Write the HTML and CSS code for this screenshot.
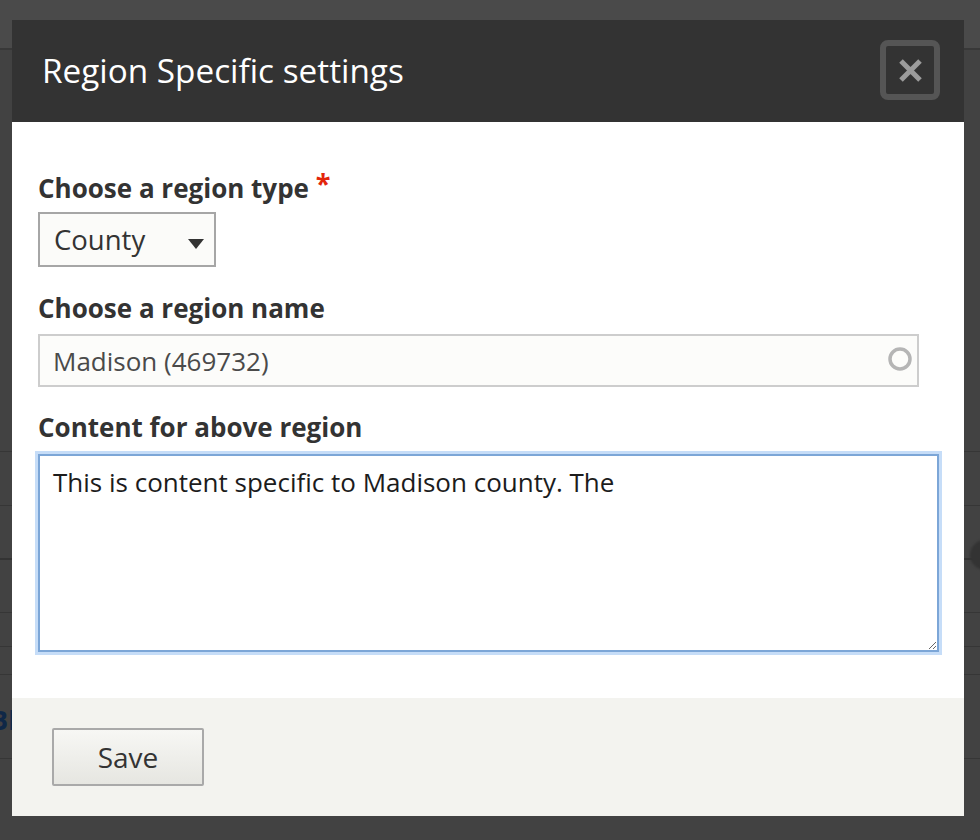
FILE: index.html
```html
<!DOCTYPE html>
<html lang="en">
<head>
<meta charset="utf-8">
<title>Region Specific settings</title>
<link rel="stylesheet" href="styles.css">
</head>
<body>
<div class="page">
  <div class="topbar"></div>
  <div class="row r1"></div>
  <div class="row r2"></div>
  <div class="row r3 has-icon"><span class="help-dot"></span></div>
  <div class="row r4"></div>
  <div class="row r5"></div>
  <div class="row r6"></div>
  <div class="row r7"><span class="link-text">Bl</span></div>
  <div class="row r8"></div>
</div>

<div class="dialog" role="dialog" aria-labelledby="dlg-title">
  <div class="dlg-head">
    <h2 class="dlg-title" id="dlg-title">Region Specific settings</h2>
    <button class="dlg-close" type="button" aria-label="Close">
      <svg width="25" height="25" viewBox="0 0 25 25" aria-hidden="true">
        <path d="M3 3 L22 22 M22 3 L3 22" stroke="#9c9c9c" stroke-width="5" fill="none"/>
      </svg>
    </button>
  </div>
  <div class="dlg-body">
    <div class="field field-type">
      <label class="field-label" for="region-type">Choose a region type <span class="req">*</span></label>
      <span class="select-wrap">
        <select id="region-type" class="select">
          <option>County</option>
        </select>
        <svg class="select-arrow" width="16" height="10" viewBox="0 0 16 10" aria-hidden="true"><path d="M0 0 H16 L8 10 Z" fill="#333"/></svg>
      </span>
    </div>
    <div class="field field-name">
      <label class="field-label" for="region-name">Choose a region name</label>
      <span class="input-wrap">
        <input id="region-name" class="text-input" type="text" value="Madison (469732)">
        <svg class="throbber" width="24" height="24" viewBox="0 0 24 24" aria-hidden="true"><circle cx="12" cy="12" r="10" stroke="#b5b5b5" stroke-width="3.5" fill="none"/></svg>
      </span>
    </div>
    <div class="field field-content">
      <label class="field-label" for="region-content">Content for above region</label>
      <textarea id="region-content" class="textarea">This is content specific to Madison county. The</textarea>
    </div>
  </div>
  <div class="dlg-foot">
    <button class="btn" type="button">Save</button>
  </div>
</div>
</body>
</html>
```

FILE: styles.css
```css
* {
  box-sizing: border-box;
}

html,
body {
  margin: 0;
  padding: 0;
}

body {
  width: 980px;
  height: 840px;
  overflow: hidden;
  position: relative;
  background: #424242;
  font-family: "Open Sans", "Liberation Sans", sans-serif;
}

/* Background page (dimmed behind the modal) */
.topbar {
  height: 50px;
  background: #4a4a4a;
  border-bottom: 2px solid #383838;
}

.row {
  border-bottom: 1px solid #363636;
}

.r1 { height: 402px; }
.r2 { height: 54px; }
.r3 { height: 54px; border-bottom: 2px solid #333; }
.r4 { height: 53px; }
.r5 { height: 34px; }
.r6 { height: 28px; }
.r7 {
  height: 84px;
  display: flex;
  align-items: center;
  overflow: hidden;
}
.r8 { height: 90px; border-bottom: 0; }

.has-icon {
  display: flex;
  justify-content: flex-end;
  align-items: flex-end;
}

.help-dot {
  width: 30px;
  height: 30px;
  border-radius: 50%;
  background: #333;
  margin-right: -20px;
  margin-bottom: -12px;
  filter: blur(1.2px);
}

.link-text {
  margin-left: -10px;
  font-size: 27px;
  font-weight: 700;
  color: #0f2847;
  padding-top: 6px;
}

/* Dialog */
.dialog {
  position: absolute;
  left: 12px;
  top: 20px;
  width: 952px;
  background: #fff;
}

.dlg-head {
  height: 102px;
  background: #333;
  display: flex;
  align-items: center;
  justify-content: space-between;
  padding: 0 24px 0 30px;
}

.dlg-title {
  margin: 0 0 2px;
  font-size: 33.3px;
  font-weight: 400;
  line-height: 28px;
  color: #fff;
}

.dlg-close {
  width: 60px;
  height: 60px;
  margin-top: -2px;
  padding: 0;
  border: 6px solid #555;
  border-radius: 8px;
  background: #333;
  display: flex;
  align-items: center;
  justify-content: center;
}

.dlg-body {
  padding: 52px 25px 46px 26px;
}

.field-name {
  margin-top: 27px;
}

.field-content {
  margin-top: 26px;
}

.field-label {
  display: block;
  font-size: 26px;
  font-weight: 700;
  line-height: 28px;
  color: #333;
  margin-bottom: 12px;
}

.field-type .field-label {
  margin-bottom: 10px;
}

.field-content .field-label {
  margin-bottom: 13px;
}

.req {
  color: #e3260b;
  font-size: 27px;
  vertical-align: top;
  position: relative;
  top: -5px;
}

.select-wrap {
  position: relative;
  display: block;
  width: 178px;
  height: 55px;
}

.select {
  display: block;
  width: 100%;
  height: 100%;
  margin: 0;
  padding: 0 0 0 14px;
  border: 2px solid #a6a6a6;
  border-radius: 0;
  background: #fbfbf9;
  font-family: inherit;
  font-size: 27.5px;
  color: #333;
  -webkit-appearance: none;
  appearance: none;
  outline: none;
}

.select-arrow {
  position: absolute;
  right: 12px;
  top: 27px;
  pointer-events: none;
}

.input-wrap {
  position: relative;
  display: block;
  width: 881px;
  height: 53px;
}

.text-input {
  display: block;
  width: 100%;
  height: 100%;
  margin: 0;
  padding: 0 13px;
  border: 2px solid #cdcdcd;
  border-radius: 0;
  background: #fcfcfa;
  font-family: inherit;
  font-size: 26px;
  color: #4a4a4a;
  outline: none;
}

.throbber {
  position: absolute;
  right: 7px;
  top: 13px;
  filter: blur(0.6px);
}

.textarea {
  display: block;
  width: 901px;
  height: 198px;
  margin: 0;
  padding: 9px 13px 7px;
  border: 2px solid #7ca6d7;
  border-radius: 0;
  box-shadow: 0 0 0 3px #c6ddf8;
  background: #fff;
  font-family: inherit;
  font-size: 26px;
  line-height: 34px;
  color: #1c1c1c;
  outline: none;
  resize: vertical;
}

.dlg-foot {
  background: #f3f3ef;
  padding: 30px 40px;
}

.btn {
  display: block;
  width: 152px;
  height: 58px;
  margin: 0;
  padding: 0;
  border: 2px solid #a9a9a9;
  border-radius: 2px;
  background: linear-gradient(#f7f7f4, #e6e6e1);
  font-family: inherit;
  font-size: 28px;
  color: #333;
}
```
